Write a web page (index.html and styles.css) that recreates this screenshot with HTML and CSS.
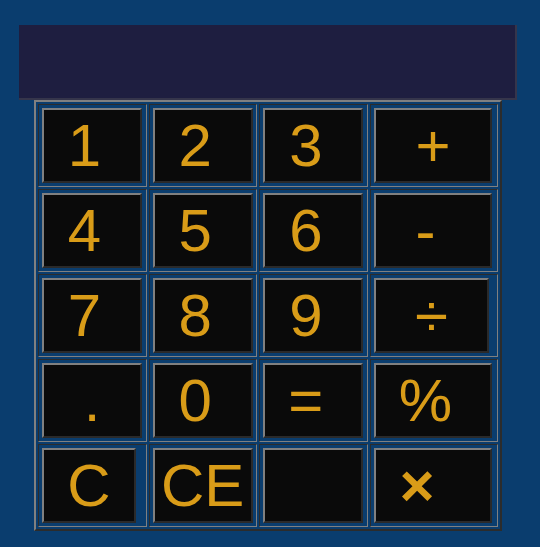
FILE: index.html
```html
<!DOCTYPE html>
<html>
<head>
<meta charset="utf-8">
<title>Calculator</title>
<link rel="stylesheet" href="styles.css">
</head>
<body>
<div class="calc">
  <div class="display"></div>
  <div class="keys">
    <div class="cell"><button class="key sp">1</button></div>
    <div class="cell"><button class="key sp">2</button></div>
    <div class="cell"><button class="key sp">3</button></div>
    <div class="cell"><button class="key op">+</button></div>

    <div class="cell"><button class="key sp">4</button></div>
    <div class="cell"><button class="key sp">5</button></div>
    <div class="cell"><button class="key sp">6</button></div>
    <div class="cell"><button class="key op sp">-</button></div>

    <div class="cell"><button class="key sp">7</button></div>
    <div class="cell"><button class="key sp">8</button></div>
    <div class="cell"><button class="key sp">9</button></div>
    <div class="cell"><button class="key op div">÷</button></div>

    <div class="cell"><button class="key">.</button></div>
    <div class="cell"><button class="key sp">0</button></div>
    <div class="cell"><button class="key sp">=</button></div>
    <div class="cell"><button class="key op sp">%</button></div>

    <div class="cell"><button class="key clear">C</button></div>
    <div class="cell"><button class="key">CE</button></div>
    <div class="cell"><button class="key"></button></div>
    <div class="cell"><button class="key op sp2 times">×</button></div>
  </div>
</div>
</body>
</html>
```

FILE: styles.css
```css
html, body {
  margin: 0;
  padding: 0;
}

body {
  background: #0a3d6e;
  font-family: "Liberation Sans", Arial, sans-serif;
}

.calc {
  padding: 25px 0 0 19px;
}

.display {
  box-sizing: border-box;
  width: 498px;
  height: 75px;
  background: #1e1e40;
  border-right: 2px solid #35354b;
  border-bottom: 2px solid #35354b;
}

.keys {
  box-sizing: border-box;
  margin-left: 15px;
  width: 468px;
  display: grid;
  grid-template-columns: 1fr 1fr 1fr 128px;
  gap: 2px;
  padding: 2px;
  border-style: solid;
  border-width: 2px;
  border-color: #808080 #2c2c2c #2c2c2c #808080;
}

.cell {
  padding: 3px;
  border-style: solid;
  border-width: 1px;
  border-color: #2c2c2c #808080 #808080 #2c2c2c;
  display: flex;
  align-items: flex-start;
}

.key {
  box-sizing: border-box;
  width: 100px;
  height: 75px;
  margin: 0;
  padding: 0;
  background: #0a0a0a;
  color: #d99c18;
  font-family: "Liberation Sans", Arial, sans-serif;
  font-size: 60px;
  line-height: 1;
  border-style: solid;
  border-width: 2px;
  border-color: #808080 #2a2a2a #2a2a2a #808080;
  text-align: center;
}

.op {
  width: 118px;
}

.div {
  width: 115px;
}

.clear {
  width: 94px;
}

.sp {
  padding-right: 15px;
}

.sp2 {
  padding-right: 32px;
}

.times {
  font-weight: bold;
}
```
